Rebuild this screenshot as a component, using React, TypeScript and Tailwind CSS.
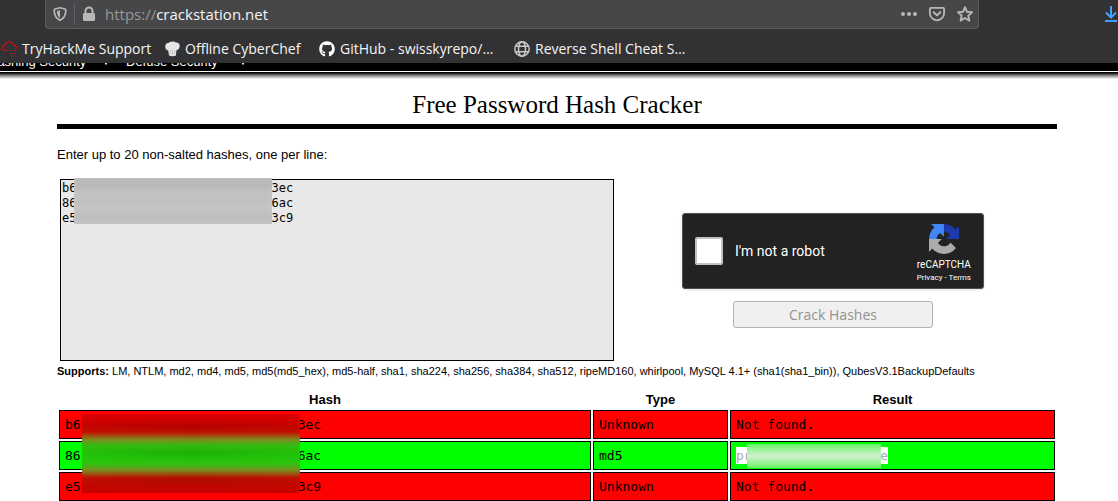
import React from "react";
import { FaGithub } from "react-icons/fa";

const UI = "font-['Open_Sans','Noto_Sans',sans-serif]";
const MONO = "font-['DejaVu_Sans_Mono',monospace]";

function ShieldIcon() {
  return (
    <svg className="size-4" viewBox="0 0 16 16" fill="none" stroke="#b8b8ba">
      <path strokeWidth="1.7" strokeLinejoin="round" d="M8 1.7 3 3c-.5.1-.8.4-.8.9 0 4.500 1 8.300 5.800 10.400 4.800-2.100 5.800-5.900 5.800-10.400 0-.5-.3-.8-.8-.9z" />
      <path fill="#b8b8ba" stroke="none" d="M8 4.200v7.700C5.600 10.500 5 8 4.900 5z" />
    </svg>
  );
}

function LockIcon() {
  return (
    <svg className="size-4" viewBox="0 0 16 16">
      <path fill="none" stroke="#b8b8ba" strokeWidth="2" d="M4.500 8V5a3.500 3.500 0 0 1 7 0v3" />
      <rect x="2" y="7" width="12" height="8" rx="1.300" fill="#b8b8ba" />
    </svg>
  );
}

function DotsIcon() {
  return (
    <svg className="size-4" viewBox="0 0 16 16" fill="#b8b8ba">
      <circle cx="2" cy="8" r="2" />
      <circle cx="8" cy="8" r="2" />
      <circle cx="14" cy="8" r="2" />
    </svg>
  );
}

function PocketIcon() {
  return (
    <svg className="size-4" viewBox="0 0 16 16" fill="none" stroke="#b8b8ba" strokeWidth="1.800" strokeLinecap="round" strokeLinejoin="round">
      <path d="M1.900 1.800h12.200c.6 0 1 .4 1 1v4.400a7.100 7.100 0 0 1-14.200 0V2.800c0-.6.4-1 1-1z" />
      <path d="m4.700 6.200 3.300 3.200 3.300-3.200" strokeWidth="2" />
    </svg>
  );
}

function StarIcon() {
  return (
    <svg className="size-4" viewBox="0 0 16 16" fill="none" stroke="#b8b8ba" strokeWidth="1.900" strokeLinejoin="round">
      <path d="m8 1.200 2 4.600 5 .5-3.700 3.300 1.100 5L8 12l-4.400 2.600 1.100-5L1 6.300l5-.5z" />
    </svg>
  );
}

function DownloadIcon() {
  return (
    <svg className="h-4 w-3" viewBox="0 0 12 16" fill="none" stroke="#45a1ff" strokeWidth="2">
      <path d="M6 0v11M1 6.500l5 5 5-5M0 15h12" />
    </svg>
  );
}

function CloudIcon() {
  return (
    <svg className="size-4" viewBox="0 0 16 16" fill="none" stroke="#c1121f" strokeWidth="1.200">
      <path d="M7 9.500H3.200a2.600 2.600 0 0 1 0-5.100C4 2.300 5.500.9 8 .9c2.300 0 3.700 1.200 4.200 3 2 .1 3.200 1.300 3.200 2.800 0 .9-.4 1.700-1 2.200" />
      <path strokeDasharray="3 1" strokeOpacity=".7" d="M8 9.500h6M9 12.500h6M10 15h5" />
    </svg>
  );
}

function ChefHatIcon() {
  return (
    <svg className="size-4" viewBox="0 0 16 16">
      <path fill="#e6e6e6" d="M4.200 9.500C2 9 1.200 7.500 1.300 5.300 1.500 3 2.700 2 4.600 2.100 5.300.8 6.600.4 7.900.8c1.300-.8 3-.4 3.900.8 2.500-.2 4 1.100 3.900 3.400-.1 2.300-1 3.800-3.300 4.300L12 14.500c-1.800 1-5 1-7 0z" />
      <path stroke="#b5b5b5" strokeWidth=".7" d="m5.900 9 .4 4M8.300 9v4.500M10.600 9l-.3 4" />
    </svg>
  );
}

function GlobeIcon() {
  return (
    <svg className="size-4" viewBox="0 0 16 16" fill="none" stroke="#c8c8ca" strokeWidth="1.500">
      <circle cx="8" cy="8" r="7.200" />
      <ellipse cx="8" cy="8" rx="3.500" ry="7.200" />
      <path d="M1.500 5.300h13M1.500 10.700h13" />
    </svg>
  );
}

function RecaptchaLogo() {
  return (
    <svg className="size-[30px]" viewBox="0 0 64 64">
      <path fill="#1c3aa9" d="M64 31.955l-.033-1.370V4.687l-7.160 7.160C50.948 4.674 42.033.093 32.050.093c-10.400 0-19.622 4.960-25.458 12.640l11.736 11.860a15.550 15.550 0 0 1 4.754-5.334c2.050-1.600 4.952-2.906 8.968-2.906.485 0 .860.057 1.135.163 4.976.393 9.288 3.140 11.828 7.124l-8.307 8.307L64 31.953" />
      <path fill="#4285f4" d="M31.862.094l-1.370.033H4.594l7.160 7.160C4.580 13.147 0 22.060 0 32.046c0 10.400 4.960 19.622 12.640 25.458L24.500 45.768a15.550 15.550 0 0 1-5.334-4.754c-1.600-2.050-2.906-4.952-2.906-8.968 0-.485.057-.860.163-1.135.393-4.976 3.140-9.288 7.124-11.828l8.307 8.307L31.860.095" />
      <path fill="#ababab" d="M.001 32.045l.033 1.370v25.898l7.160-7.160c5.860 7.173 14.774 11.754 24.760 11.754 10.400 0 19.622-4.960 25.458-12.640l-11.736-11.860a15.550 15.550 0 0 1-4.754 5.334c-2.050 1.600-4.952 2.906-8.968 2.906-.485 0-.860-.057-1.135-.163-4.976-.393-9.288-3.140-11.828-7.124l8.307-8.307c-10.522.040-22.400.066-27.295-.005" />
    </svg>
  );
}

const bookmarks = [
  { label: "TryHackMe Support", icon: <CloudIcon />, width: "w-[151px]" },
  { label: "Offline CyberChef", icon: <ChefHatIcon />, width: "w-[143px]" },
  { label: "GitHub - swisskyrepo/…", icon: <FaGithub className="size-4 text-white" />, width: "w-[183px]" },
  { label: "Reverse Shell Cheat S…", icon: <GlobeIcon />, width: "w-[182px]" },
];

function Browser() {
  return (
    <header className={`${UI} bg-[#323234] text-[#f5f5f5]`}>
      <div className="flex h-[29px] items-start justify-between pl-[45px]">
        <div className="mr-[126px] flex h-[29px] flex-1 items-center rounded-b border border-t-0 border-[#5c5c5e] bg-[#474749] px-[5px]">
          <button aria-label="Tracking protection" className="flex w-[23px] pl-px"><ShieldIcon /></button>
          <span className="mr-[6px] h-[22px] w-px bg-[#5f6268]" />
          <button aria-label="Site information" className="mr-2"><LockIcon /></button>
          <div className="flex flex-1 pt-px text-[15px]">
            <span className="text-[#98989a]">https://</span>
            <span>crackstation.net</span>
          </div>
          <div className="flex gap-3">
            <button aria-label="Page actions"><DotsIcon /></button>
            <button aria-label="Save to Pocket"><PocketIcon /></button>
            <button aria-label="Bookmark this page"><StarIcon /></button>
          </div>
        </div>
        <button aria-label="Downloads" className="mt-[6px] w-[13px]"><DownloadIcon /></button>
      </div>
      <nav className="flex h-[34px] items-center gap-3 pt-[6px] pl-px text-sm whitespace-nowrap">
        {bookmarks.map((b) => (
          <a key={b.label} href="#bookmark" className={`${b.width} flex shrink-0 items-center gap-[5px]`}>
            <span className="shrink-0">{b.icon}</span>
            {b.label}
          </a>
        ))}
      </nav>
    </header>
  );
}

function SiteNav() {
  return (
    <>
      <nav className="flex h-2 items-end overflow-hidden bg-black text-[13px] leading-[18px] text-white">
        <a href="#hashing" className="-ml-3 flex w-[138px] shrink-0 justify-between pr-[15px]">
          Hashing Security <span className="text-[10px]">▼</span>
        </a>
        <a href="#defuse" className="flex w-[122px] shrink-0 justify-between">
          Defuse Security <span className="text-[10px]">▼</span>
        </a>
      </nav>
      <div className="h-px bg-white" />
      <div className="h-[7px] bg-linear-to-b from-black via-[#858585] to-white" />
    </>
  );
}

function Smudge() {
  return <span className="block h-2 bg-linear-to-r from-black/5 via-black/15 to-black/5 blur-[3px]" />;
}

const gap = "\u00a0".repeat(27);
const initialHashes = `b6${gap}3ec\n86${gap}6ac\ne5${gap}3c9`;

const results = [
  { start: "b6", end: "3ec", type: "Unknown", found: false },
  { start: "86", end: "6ac", type: "md5", found: true },
  { start: "e5", end: "3c9", type: "Unknown", found: false },
];

function HashForm() {
  return (
    <form className="flex">
      <div className="relative ml-[3px] w-[554px] shrink-0">
        <textarea
          id="hashes"
          defaultValue={initialHashes}
          className={`${MONO} block h-[182px] w-full resize-none rounded-none border border-black bg-[#e8e8e8] px-px py-px text-xs leading-[15px] text-black`}
        />
        <div className="absolute -top-px left-[14px] flex h-[46px] w-[198px] flex-col justify-around overflow-hidden bg-linear-to-b from-[#bdbdbd] via-[#cacaca] to-[#c4c4c4]">
          <span className="block h-2 bg-black/5 blur-[3px]" />
          <span className="block h-2 bg-black/5 blur-[3px]" />
          <span className="block h-2 bg-black/5 blur-[3px]" />
        </div>
      </div>
      <div className="flex flex-1 flex-col items-center gap-3 pt-[34px] pr-[5px]">
        <div className="flex h-[76px] w-[302px] items-center rounded-[3px] border border-[#525252] bg-[#222] pr-3 pl-3 font-[Roboto,sans-serif] text-white shadow-sm">
          <input id="robot" type="checkbox" className="size-7 appearance-none rounded-xs border-2 border-[#c1c1c1] bg-white" />
          <label htmlFor="robot" className="ml-3 flex-1 text-sm">I'm not a robot</label>
          <div className="flex flex-col items-center pt-1">
            <RecaptchaLogo />
            <span className="mt-[5px] text-[10px] leading-3">reCAPTCHA</span>
            <span className="mt-[2px] text-[8px] leading-[10px]">
              <a href="#privacy">Privacy</a> - <a href="#terms">Terms</a>
            </span>
          </div>
        </div>
        <button type="button" disabled className={`${UI} h-[27px] w-[200px] rounded-[3px] border border-[#b3b3b3] bg-[#f0f0f0] text-sm text-[#929292]`}>
          Crack Hashes
        </button>
      </div>
    </form>
  );
}

function ResultsTable() {
  return (
    <div className="relative mt-[11px]">
      <table className="w-full table-fixed border-separate border-spacing-[2px] text-[13px] leading-[17px]">
        <colgroup>
          <col className="w-[532px]" />
          <col className="w-[135px]" />
          <col />
        </colgroup>
        <thead>
          <tr>
            <th>Hash</th>
            <th>Type</th>
            <th>Result</th>
          </tr>
        </thead>
        <tbody className={MONO}>
          {results.map((r) => (
            <tr key={r.start} className={r.found ? "bg-[#00ff00]" : "bg-[#ff0000]"}>
              <td className="h-[29px] border border-black px-[5px]">
                <span className="flex">
                  {r.start}
                  <span className="w-[217px]" />
                  {r.end}
                </span>
              </td>
              <td className="border border-black px-[5px]">{r.type}</td>
              <td className="border border-black px-[5px]">
                {r.found ? (
                  <span className="relative flex w-[152px] justify-between bg-white text-[#a8a8a8]">
                    <span>pr</span>
                    <span>e</span>
                    <span className="absolute -top-[3px] left-[11px] h-6 w-[134px] bg-linear-to-b from-[#62f462] via-[#d0f0d0] via-50% to-[#62f462]" />
                  </span>
                ) : (
                  "Not found."
                )}
              </td>
            </tr>
          ))}
        </tbody>
      </table>
      <div className="absolute top-[25px] left-[25px] flex h-[79px] w-[218px] flex-col justify-around overflow-hidden bg-[linear-gradient(to_bottom,#dc0000_0px,#cc0400_12px,#c81000_18px,#789020_26px,#30c010_32px,#20cc08_42px,#30c010_50px,#789020_56px,#c81000_64px,#c40000_79px)]">
        <Smudge />
        <Smudge />
        <Smudge />
      </div>
    </div>
  );
}

export default function App() {
  return (
    <div className="bg-white font-['Liberation_Sans',Arial,sans-serif] text-black">
      <Browser />
      <SiteNav />
      <main className="ml-[57px] mr-4 max-w-[1000px]">
        <h1 className="border-b-[5px] border-black pt-[10px] pb-[3px] text-center font-['Liberation_Serif',serif] text-[25px] leading-8">
          Free Password Hash Cracker
        </h1>
        <label htmlFor="hashes" className="mt-[17px] mb-4 block text-[13px] leading-[17px]">
          Enter up to 20 non-salted hashes, one per line:
        </label>
        <HashForm />
        <p className="mt-1 text-[11px] leading-[13px]">
          <strong>Supports:</strong> LM, NTLM, md2, md4, md5, md5(md5_hex), md5-half, sha1, sha224, sha256, sha384, sha512, ripeMD160, whirlpool, MySQL 4.1+ (sha1(sha1_bin)), QubesV3.1BackupDefaults
        </p>
        <ResultsTable />
      </main>
    </div>
  );
}
